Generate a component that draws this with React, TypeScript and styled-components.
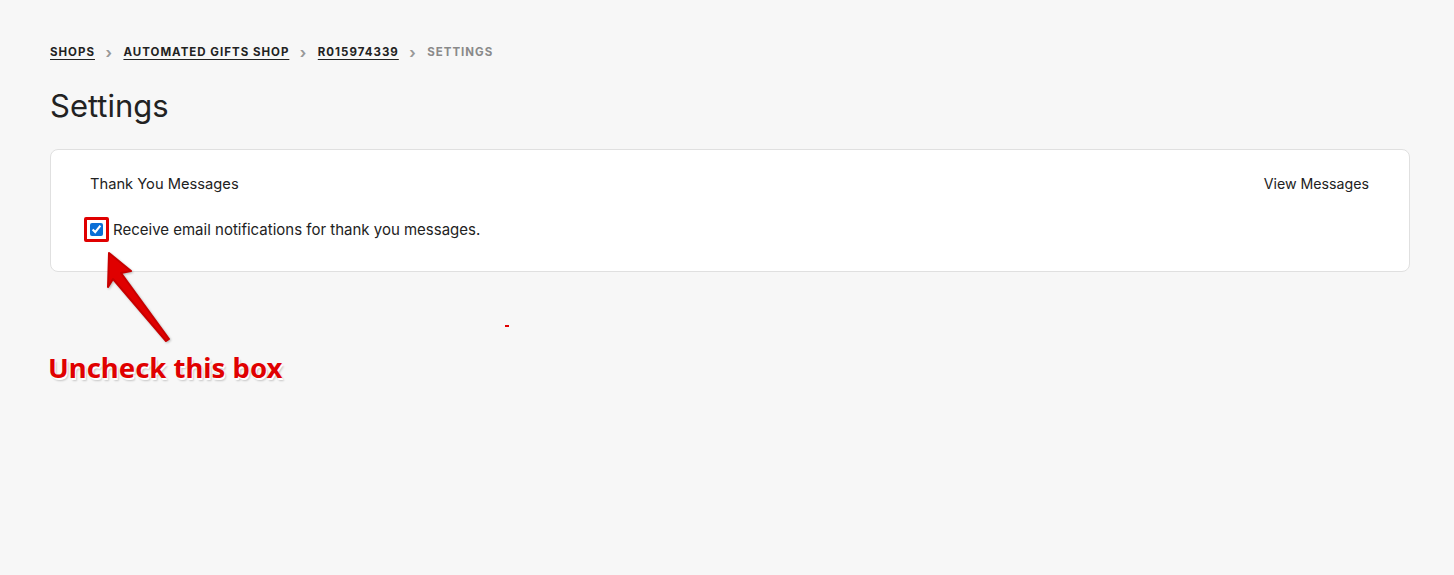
import React from 'react'
import styled, { createGlobalStyle } from 'styled-components'

const Global = createGlobalStyle`
  html, body { margin: 0; padding: 0; background: #f7f7f7; }
  body { font-family: Inter, "Noto Sans", sans-serif; color: #222; }
`

const crumbs = ['Shops', 'Automated Gifts Shop', 'R015974339']

export default function App() {
  return (
    <>
      <Global />
      <Page>
        <Breadcrumbs>
          {crumbs.map((c) => (
            <React.Fragment key={c}>
              <Crumb href="#">{c}</Crumb>
              <Sep>›</Sep>
            </React.Fragment>
          ))}
          <Current>Settings</Current>
        </Breadcrumbs>
        <Title>Settings</Title>
        <Card>
          <CardHead>
            <CardTitle>Thank You Messages</CardTitle>
            <ViewLink href="#">View Messages</ViewLink>
          </CardHead>
          <CheckRow>
            <Highlight>
              <Box type="checkbox" defaultChecked />
            </Highlight>
            <span>Receive email notifications for thank you messages.</span>
          </CheckRow>
          <Arrow width="90" height="100" viewBox="0 0 90 100">
            <path
              d="M22 6 L44 24 L34 26 L82 92 L79 94 L26 32 L21 40 Z"
              fill="#e00000"
              stroke="#c80000"
              strokeWidth="2"
              strokeLinejoin="round"
            />
          </Arrow>
        </Card>
        <Note>Uncheck this box</Note>
        <Dot />
      </Page>
    </>
  )
}

const Page = styled.div`
  position: relative;
  padding: 44px 44px 0 50px;
  min-height: 575px;
  box-sizing: border-box;
`

const Breadcrumbs = styled.nav`
  display: flex;
  align-items: center;
  gap: 10.5px;
  font-size: 11.5px;
  font-weight: 700;
  letter-spacing: 1px;
  text-transform: uppercase;
  height: 16px;
`

const Crumb = styled.a`
  color: #222;
  text-decoration: underline;
  text-underline-offset: 3px;
`

const Sep = styled.span`
  color: #999;
  font-size: 15px;
  font-weight: 700;
`

const Current = styled.span`
  color: #8a8a8a;
`

const Title = styled.h1`
  margin: 28px 0 25px;
  font-size: 31px;
  font-weight: 400;
  color: #222;
  line-height: 36px;
`

const Card = styled.section`
  position: relative;
  background: #fff;
  border: 1px solid #e0e0e0;
  border-radius: 8px;
  padding: 24px 40px 29px 39px;
`

const CardHead = styled.div`
  display: flex;
  justify-content: space-between;
  align-items: center;
  font-size: 14.7px;
  line-height: 20px;
`

const CardTitle = styled.div`
  color: #222;
`

const ViewLink = styled.a`
  color: #222;
  text-decoration: none;
  font-size: 14.2px;
`

const CheckRow = styled.label`
  display: flex;
  align-items: center;
  gap: 4px;
  margin-top: 23px;
  font-size: 15px;
  color: #222;
`

const Highlight = styled.span`
  display: inline-flex;
  margin-left: -6px;
  padding: 3px;
  border: 3px solid #e00000;
  border-radius: 2px;
  background: #fff;
`

const Box = styled.input`
  margin: 0;
  width: 13px;
  height: 13px;
  accent-color: #0a6fd6;
`

const Arrow = styled.svg`
  position: absolute;
  left: 36px;
  top: 97px;
  filter: drop-shadow(1px 1px 1px rgba(0, 0, 0, 0.25));
`

const Note = styled.div`
  margin-top: 77px;
  margin-left: -2px;
  font-family: "Noto Sans", "Open Sans", sans-serif;
  font-weight: 700;
  font-size: 27.5px;
  color: #e00000;
  text-shadow: 1px 2px 0 #fff, 2px 3px 2px rgba(0, 0, 0, 0.2);
`

const Dot = styled.span`
  position: absolute;
  left: 505px;
  top: 325px;
  width: 4px;
  height: 2px;
  background: #e00000;
`
